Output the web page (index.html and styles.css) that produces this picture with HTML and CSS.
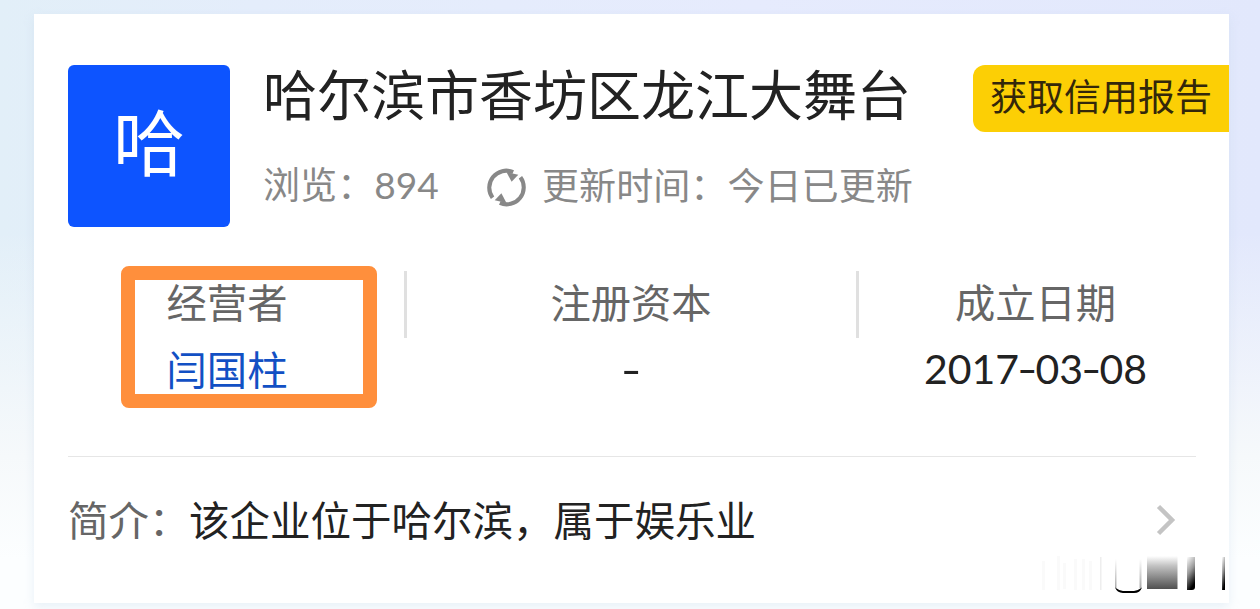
FILE: index.html
```html
<!DOCTYPE html>
<html lang="zh-CN">
  <head>
    <meta charset="UTF-8" />
    <meta name="viewport" content="width=device-width, initial-scale=1.0" />
    <title>哈尔滨市香坊区龙江大舞台</title>
    <link rel="stylesheet" href="styles.css">
  </head>
  <body>
    <div class="card">
      <div class="header">
        <div class="logo">哈</div>
        <div class="company">
          <h1>哈尔滨市香坊区龙江大舞台</h1>
          <div class="meta">
            <span class="views">浏览：<span class="num">894</span></span>
            <svg class="refresh" viewBox="0 0 40 40">
              <path d="M6.400 30A16.600 16.600 0 0 1 26.500 5" />
              <path d="M33.600 10A16.600 16.600 0 0 1 13.500 35" />
              <polygon points="20,5 31.500,7.500 25,14.500" />
              <polygon points="20,35 8.500,32.500 15,25.500" />
            </svg>
            <span>更新时间：今日已更新</span>
          </div>
        </div>
        <button class="report" type="button">获取信用报告</button>
      </div>

      <div class="info">
        <div class="info-item">
          <div class="label">经营者</div>
          <a class="value link">闫国柱</a>
          <div class="highlight"></div>
        </div>
        <div class="info-item">
          <div class="label">注册资本</div>
          <div class="value dash"><i>-</i></div>
        </div>
        <div class="info-item">
          <div class="label">成立日期</div>
          <div class="value date">2017<i>-</i>03<i>-</i>08</div>
        </div>
      </div>

      <div class="intro">
        <span class="intro-label">简介：</span>
        <span class="intro-text">该企业位于哈尔滨，属于娱乐业</span>
        <svg class="arrow" viewBox="0 0 20 32">
          <path d="M2.5 2.5L16 16L2.5 29.5" />
        </svg>
      </div>
    </div>

    <!-- faded strip in the corner -->
    <svg class="corner" viewBox="0 0 220 50">
      <defs>
        <linearGradient id="fade" x1="0" y1="0" x2="0" y2="1">
          <stop offset="0" stop-color="#fff" />
          <stop offset="0.3" stop-color="#c2c2c2" />
          <stop offset="1" stop-color="#505050" />
        </linearGradient>
        <linearGradient id="fadeDark" x1="0" y1="0" x2="0.35" y2="1">
          <stop offset="0" stop-color="#fff" />
          <stop offset="0.5" stop-color="#999" />
          <stop offset="1" stop-color="#000" />
        </linearGradient>
        <linearGradient id="fadeLight" x1="0" y1="0" x2="0" y2="1">
          <stop offset="0" stop-color="#fff" />
          <stop offset="1" stop-color="#aaa" />
        </linearGradient>
      </defs>
      <g fill="#fafafa">
        <rect x="2" y="12" width="3" height="29" />
        <rect x="17" y="7" width="3" height="34" />
        <rect x="23" y="14" width="3" height="26" />
        <rect x="34" y="10" width="3" height="31" />
        <rect x="42" y="10" width="3" height="31" />
        <rect x="49" y="12" width="3" height="29" />
        <rect x="60" y="8" width="1.5" height="33" fill="#eee" />
      </g>
      <rect x="75" y="10" width="1.5" height="29" fill="url(#fadeLight)" />
      <rect x="99.500" y="10" width="2" height="29" fill="url(#fadeLight)" />
      <path d="M75 38.500Q79 41.500 83 42H94Q98 41.500 102 38.500Q100 44 94 44H83Q77 43.500 75 38.500Z" />
      <rect x="107" y="7" width="30.500" height="33" fill="url(#fade)" />
      <path d="M147 8h8v30q0 3-3 3h-5z" fill="url(#fadeDark)" />
      <rect x="182" y="8" width="3" height="33" fill="url(#fadeDark)" />
    </svg>
  </body>
</html>
```

FILE: styles.css
```css
* {
  box-sizing: border-box;
}

body {
  margin: 0;
  height: 609px;
  padding: 14px 31px 6px 34px;
  overflow: hidden;
  position: relative;
  font-family: "Noto Sans CJK SC", sans-serif;
  color: #222;
  background: linear-gradient(to bottom, rgba(252, 254, 255, 0) 38%, #f6f9fb 75%, #fcfeff 92%),
    linear-gradient(to right, #e2eff8, #e4edfb 20%, #e6ebfd 60%, #e2e8fc);
}

.card {
  height: 589px;
  padding-top: 51px;
  background-color: #fff;
  box-shadow: 0 4px 10px rgba(190, 210, 230, 0.3);
}

.header {
  display: flex;
  align-items: flex-start;
  height: 162px;
  padding-left: 34px;
}

.logo {
  width: 162px;
  height: 162px;
  border-radius: 6px;
  background-color: #0d54ff;
  color: #fff;
  font-size: 72px;
  line-height: 148px;
  text-align: center;
}

.company {
  margin-left: 33px;
}

h1 {
  margin: 0;
  font-size: 54px;
  font-weight: 400;
  line-height: 56px;
  white-space: nowrap;
}

.meta {
  display: flex;
  align-items: center;
  margin-top: 37px;
  height: 52px;
  font-size: 37.100px;
  line-height: 52px;
  color: #888;
  white-space: nowrap;
}

.num {
  font-family: Lato, sans-serif;
}

.views {
  width: 223px;
}

.refresh {
  width: 41px;
  height: 41px;
  margin: 7px 15px 0 0;
  fill: #888;
}

.refresh path {
  fill: none;
  stroke: #888;
  stroke-width: 4;
}

.report {
  width: 256px;
  height: 67px;
  margin-left: auto;
  padding: 0 0 7px;
  border: none;
  border-radius: 12px 0 0 12px;
  background-color: #fccf05;
  color: #33270a;
  font-family: inherit;
  font-size: 37px;
  line-height: 60px;
}

.info {
  display: grid;
  grid-template-columns: 356px 452px 357px;
  margin: 44px 15px 0 15px;
  height: 185px;
}

.info-item {
  position: relative;
  text-align: center;
  font-size: 40.3px;
}

.info-item + .info-item::before {
  content: "";
  position: absolute;
  left: -1px;
  top: 0;
  width: 3px;
  height: 67px;
  background-color: #e0e0e0;
}

.label {
  height: 67px;
  line-height: 60px;
  color: #666;
}

.value {
  display: block;
  line-height: 60px;
}

.link {
  color: #1250c4;
}

.date,
.dash {
  font-family: Lato, sans-serif;
  font-size: 41.5px;
  line-height: 62px;
}

.date {
  font-size: 41px;
}

.date i,
.dash i {
  display: inline-block;
  width: 16.500px;
  font-style: normal;
  transform: scaleX(1.35);
}

/* orange frame around the operator */
.highlight {
  position: absolute;
  left: 72px;
  top: -5px;
  width: 256px;
  height: 142px;
  border: 14px solid #ff8f3c;
  border-radius: 8px;
}

.intro {
  display: flex;
  align-items: center;
  margin: 0 33px 0 34px;
  padding: 0 20px 4px 0;
  height: 130px;
  border-top: 1px solid #e6e6e6;
  font-size: 40.5px;
  white-space: nowrap;
}

.intro-label {
  width: 121px;
  color: #666;
}

.intro-label,
.intro-text {
  line-height: 60px;
  margin-bottom: 2px;
}

.arrow {
  width: 20px;
  height: 32px;
  margin-left: auto;
  fill: none;
  stroke: #c4c4c4;
  stroke-width: 4.5;
}

.corner {
  position: absolute;
  left: 1040px;
  top: 549px;
  width: 220px;
  height: 50px;
}
```
